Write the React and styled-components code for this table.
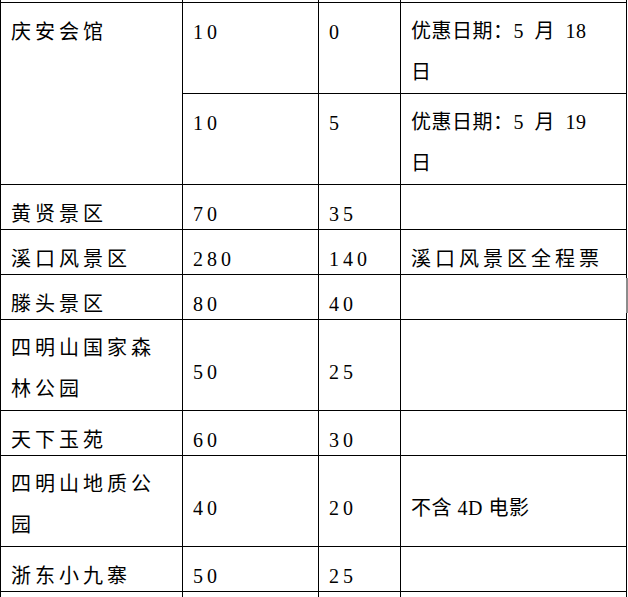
import React from "react";
import styled, { createGlobalStyle } from "styled-components";

const GlobalStyle = createGlobalStyle`
  html, body {
    margin: 0;
    padding: 0;
    background: #ffffff;
  }
`;

const rows = [
  { name: "庆安会馆", rowSpan: 2, price: "10", deal: "0", note: ["优惠日期：5 月 18", "日"], top: true, gap: 5 },
  { price: "10", deal: "5", note: ["优惠日期：5 月 19", "日"], top: true, gap: 5 },
  { name: "黄贤景区", price: "70", deal: "35" },
  { name: "溪口风景区", price: "280", deal: "140", note: ["溪口风景区全程票"] },
  { name: "滕头景区", price: "80", deal: "40" },
  { name: ["四明山国家森", "林公园"], price: "50", deal: "25" },
  { name: "天下玉苑", price: "60", deal: "30" },
  { name: ["四明山地质公", "园"], price: "40", deal: "20", note: ["不含 4D 电影"], gap: 0 },
  { name: "浙东小九寨", price: "50", deal: "25" },
];

const Page = styled.div`
  position: relative;
  width: 628px;
  height: 597px;
  overflow: hidden;
  background: #fff;
`;

const Table = styled.table`
  border-collapse: collapse;
  table-layout: fixed;
  width: 626px;
  color: #000;
  font-family: "Liberation Serif", "Noto Sans CJK SC", serif;
  font-size: 20px;
`;

const Cell = styled.td`
  border: 1px solid #000;
  padding: ${(p) => (p.$multi ? "8px" : "15px")} 8px 0 10px;
  line-height: ${(p) => (p.$multi ? "41px" : "29px")};
  letter-spacing: ${(p) => (p.$gap !== undefined ? "0.5px" : "4px")};
  word-spacing: ${(p) => (p.$gap !== undefined ? `${p.$gap}px` : "0")};
  vertical-align: ${(p) => (p.$top ? "top" : "middle")};
  white-space: nowrap;
  overflow: hidden;
`;

const Edge = styled.td`
  border-left: 1px solid #000;
  border-right: 1px solid #000;
  border-top: ${(p) => (p.$last ? "1px solid #000" : "none")};
  border-bottom: ${(p) => (p.$last ? "none" : "1px solid #000")};
  height: ${(p) => p.$h}px;
  padding: 0;
`;

const Handle = styled.div`
  position: absolute;
  right: 0;
  top: 278px;
  width: 2px;
  height: 35px;
  background: #8c8c8c;
`;

const Lines = ({ text }) => {
  const parts = Array.isArray(text) ? text : [text];
  return parts.map((t, i) => (
    <React.Fragment key={i}>
      {i > 0 && <br />}
      {t}
    </React.Fragment>
  ));
};

const EdgeRow = ({ h, last }) => (
  <tr>
    {[0, 1, 2, 3].map((i) => (
      <Edge key={i} $h={h} $last={last} />
    ))}
  </tr>
);

export default function App() {
  return (
    <Page>
      <GlobalStyle />
      <Table>
        <colgroup>
          <col style={{ width: 182 }} />
          <col style={{ width: 136 }} />
          <col style={{ width: 82 }} />
          <col style={{ width: 226 }} />
        </colgroup>
        <tbody>
          <EdgeRow h={2} />
          {rows.map((r, i) => {
            const multiName = Array.isArray(r.name) && r.name.length > 1;
            const multiNote = Array.isArray(r.note) && r.note.length > 1;
            return (
              <tr key={i}>
                {r.name && (
                  <Cell rowSpan={r.rowSpan || 1} $top $multi={multiName}>
                    <Lines text={r.name} />
                  </Cell>
                )}
                <Cell $top={r.top}>{r.price}</Cell>
                <Cell $top={r.top}>{r.deal}</Cell>
                <Cell $top={r.top} $multi={multiNote} $gap={r.gap}>
                  {r.note ? <Lines text={r.note} /> : null}
                </Cell>
              </tr>
            );
          })}
          <EdgeRow h={10} last />
        </tbody>
      </Table>
      <Handle />
    </Page>
  );
}
